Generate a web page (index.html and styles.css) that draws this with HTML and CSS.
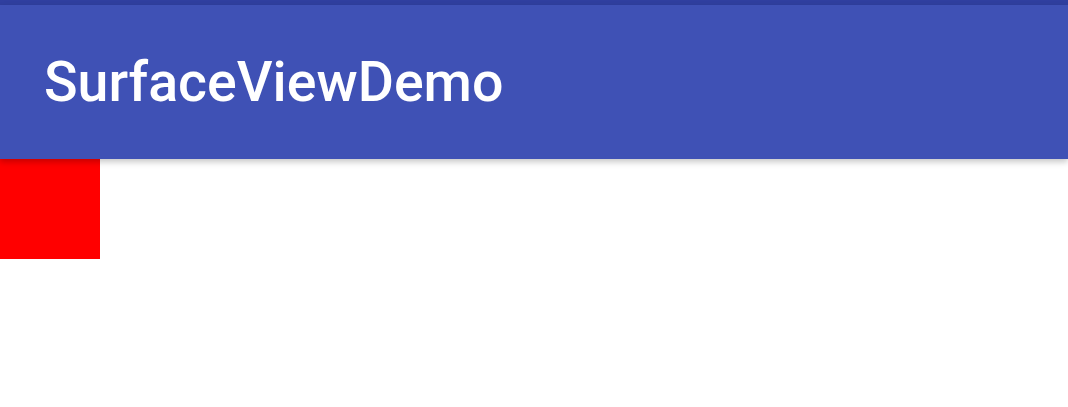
FILE: index.html
```html
<!DOCTYPE html>
<html>
<head>
<meta charset="utf-8">
<link rel="stylesheet" href="styles.css">
</head>
<body>
<div class="status-bar"></div>
<header class="app-bar">
  <h1 class="title">SurfaceViewDemo</h1>
</header>
<main class="content">
  <div class="surface"></div>
</main>
</body>
</html>
```
FILE: styles.css
```css
html, body {
  margin: 0;
  padding: 0;
  width: 1068px;
  height: 407px;
  overflow: hidden;
  background: #ffffff;
  font-family: Roboto, "Noto Sans", sans-serif;
}
.status-bar {
  height: 5px;
  background: #303f9f;
}
.app-bar {
  position: relative;
  z-index: 1;
  height: 154px;
  box-sizing: border-box;
  background: #3f51b5;
  display: flex;
  align-items: center;
  padding-left: 44px;
  padding-top: 2px;
  box-shadow: 0 3px 6px rgba(0, 0, 0, 0.22);
}
.title {
  margin: 0;
  color: #ffffff;
  font-size: 55.5px;
  font-weight: 500;
  line-height: 1;
  letter-spacing: 0;
}
.content {
  display: flex;
}
.surface {
  width: 100px;
  height: 100px;
  background: #ff0000;
}
```
